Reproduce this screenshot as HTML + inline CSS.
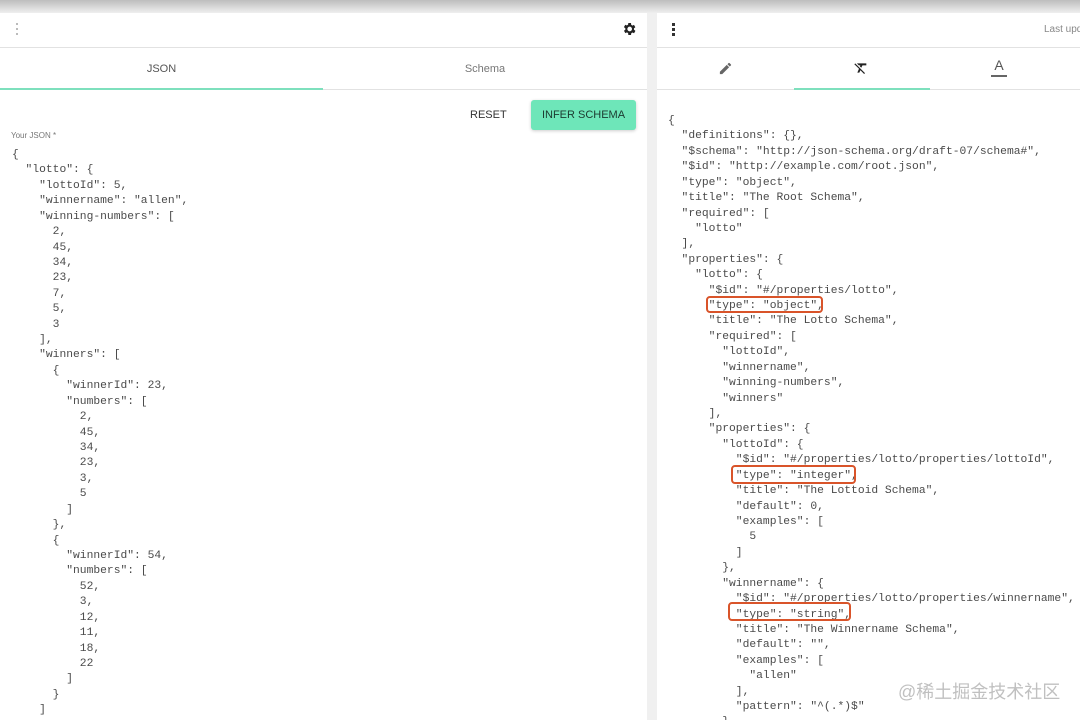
<!DOCTYPE html>
<html><head><meta charset="utf-8"><style>
*{margin:0;padding:0;box-sizing:border-box}
body{width:1080px;height:720px;overflow:hidden;background:#f0f0f0;font-family:"Liberation Sans",sans-serif;position:relative}
.top{position:absolute;left:0;top:0;width:1080px;height:13px;background:linear-gradient(#bdbdbd,#efefef)}
.panel{position:absolute;top:13px;background:#fff;height:707px;overflow:hidden}
.hdr{position:absolute;left:0;right:0;top:0;height:35px;border-bottom:1px solid #e2e2e2}
.tabs{position:absolute;left:0;right:0;top:35px;height:42px;border-bottom:1px solid #e2e2e2}
pre{position:absolute;font-family:"Liberation Mono",monospace;font-size:11.3px;line-height:15.42px;color:#4a4a4a}
.box{position:absolute;border:2px solid #d9542a;border-radius:4px}
</style></head><body>
<div class="top"></div>
<div class="panel" style="left:0;width:647px">
 <div class="hdr">
  <div style="position:absolute;left:16px;top:10px;width:2px;height:13px;background:repeating-linear-gradient(#bbb 0 2px,transparent 2px 5px)"></div>
  <svg style="position:absolute;left:621px;top:8px" width="16" height="16" viewBox="0 0 24 24"><path fill="#222" d="M19.4 13a7.5 7.5 0 0 0 0-2l2.1-1.6-2-3.5-2.5 1a7.3 7.3 0 0 0-1.7-1L15 3h-4l-.4 2.7a7.3 7.3 0 0 0-1.7 1l-2.5-1-2 3.5L6.6 11a7.5 7.5 0 0 0 0 2l-2.1 1.6 2 3.5 2.5-1a7.3 7.3 0 0 0 1.7 1L11 21h4l.4-2.7a7.3 7.3 0 0 0 1.7-1l2.5 1 2-3.5zM13 15.5a3.5 3.5 0 1 1 0-7 3.5 3.5 0 0 1 0 7z"/></svg>
 </div>
 <div class="tabs">
  <div style="position:absolute;left:0;width:323px;top:15px;text-align:center;font-size:11px;color:#555">JSON</div>
  <div style="position:absolute;left:323px;width:324px;top:15px;text-align:center;font-size:11px;color:#777">Schema</div>
  <div style="position:absolute;left:0;width:323px;bottom:-1px;height:2px;background:#7ee0bd"></div>
 </div>
 <div style="position:absolute;left:470px;top:96px;font-size:11px;color:#333">RESET</div>
 <div style="position:absolute;left:531px;top:87px;width:105px;height:30px;background:#6ee6b9;border-radius:3px;box-shadow:0 1px 3px rgba(0,0,0,.2);font-size:11px;color:#1c3a30;text-align:center;line-height:30px">INFER SCHEMA</div>
 <div style="position:absolute;left:11px;top:118px;font-size:8px;color:#777">Your JSON *</div>
<pre style="left:12px;top:135px">{
  "lotto": {
    "lottoId": 5,
    "winnername": "allen",
    "winning-numbers": [
      2,
      45,
      34,
      23,
      7,
      5,
      3
    ],
    "winners": [
      {
        "winnerId": 23,
        "numbers": [
          2,
          45,
          34,
          23,
          3,
          5
        ]
      },
      {
        "winnerId": 54,
        "numbers": [
          52,
          3,
          12,
          11,
          18,
          22
        ]
      }
    ]</pre>
</div>
<div class="panel" style="left:657px;width:423px">
 <div class="hdr">
  <div style="position:absolute;left:15px;top:10px;width:3px;height:13px;background:repeating-linear-gradient(#333 0 3px,transparent 3px 5px)"></div>
  <div style="position:absolute;left:387px;top:11px;font-size:10px;color:#888;white-space:nowrap">Last updated</div>
 </div>
 <div class="tabs">
  <svg style="position:absolute;left:61px;top:13px" width="15" height="15" viewBox="0 0 24 24"><path fill="#666" d="M3 17.25V21h3.75L17.8 9.94l-3.75-3.75zM20.7 7.04a1 1 0 0 0 0-1.41l-2.34-2.34a1 1 0 0 0-1.41 0l-1.83 1.83 3.75 3.75z"/></svg>
  <svg style="position:absolute;left:196px;top:12px" width="16" height="16" viewBox="0 0 24 24"><path fill="#222" d="M6 5v.2L8.8 8H11l-.7 1.6 2.1 2.1L14.2 8H20V5zM3.3 5 2 6.3 9 13.2 6.5 19h3l1.6-3.7 5.6 5.7 1.3-1.3z"/></svg>
  <div style="position:absolute;left:334px;top:9px;width:16px;text-align:center;font-size:14px;color:#555">A</div>
  <div style="position:absolute;left:334px;top:27px;width:16px;height:2px;background:#666"></div>
  <div style="position:absolute;left:137px;width:136px;bottom:-1px;height:2px;background:#7ee0bd"></div>
 </div>
<pre style="left:11px;top:101px">{
  "definitions": {},
  "$schema": "http://json-schema.org/draft-07/schema#",
  "$id": "http://example.com/root.json",
  "type": "object",
  "title": "The Root Schema",
  "required": [
    "lotto"
  ],
  "properties": {
    "lotto": {
      "$id": "#/properties/lotto",
      "type": "object",
      "title": "The Lotto Schema",
      "required": [
        "lottoId",
        "winnername",
        "winning-numbers",
        "winners"
      ],
      "properties": {
        "lottoId": {
          "$id": "#/properties/lotto/properties/lottoId",
          "type": "integer",
          "title": "The Lottoid Schema",
          "default": 0,
          "examples": [
            5
          ]
        },
        "winnername": {
          "$id": "#/properties/lotto/properties/winnername",
          "type": "string",
          "title": "The Winnername Schema",
          "default": "",
          "examples": [
            "allen"
          ],
          "pattern": "^(.*)$"
        },</pre>
 <div class="box" style="left:49px;top:283px;width:117px;height:17px"></div>
 <div class="box" style="left:74px;top:452px;width:125px;height:19px"></div>
 <div class="box" style="left:71px;top:589px;width:123px;height:19px"></div>
 <div style="position:absolute;left:241px;top:665px;font-family:'Liberation Sans','Noto Sans CJK SC',sans-serif;font-size:18px;color:rgba(130,130,130,.5)">@稀土掘金技术社区</div>
</div>
</body></html>
